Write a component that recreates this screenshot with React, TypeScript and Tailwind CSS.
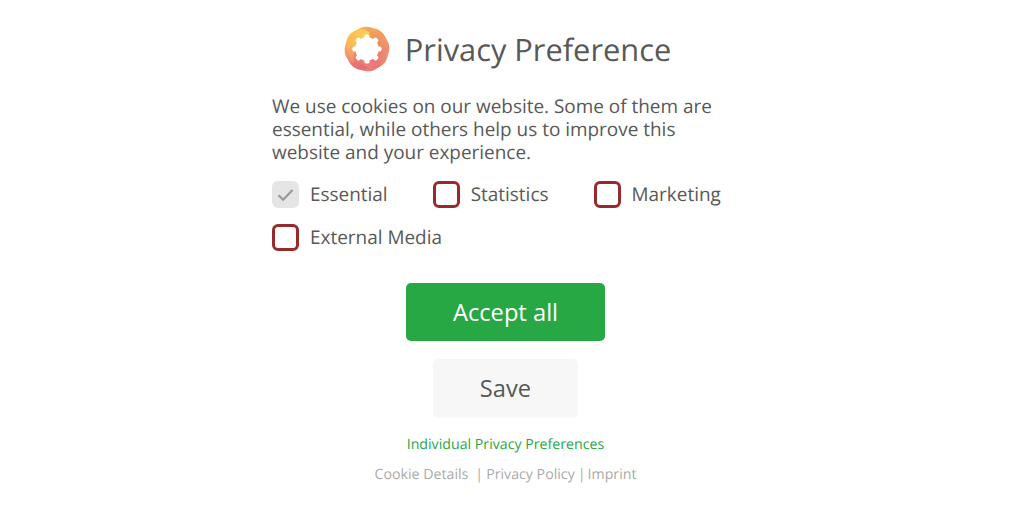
import clsx from "clsx";

interface Category {
  label: string;
  locked?: boolean;
}

const categories: Category[] = [
  { label: "Essential", locked: true },
  { label: "Statistics" },
  { label: "Marketing" },
  { label: "External Media" },
];

// One lobe of the ring per entry, clockwise from the top
const lobes = [
  { from: "#fbbd55", to: "#f0925a" },
  { from: "#f9ae5c", to: "#e98262" },
  { from: "#f4a468", to: "#e67868" },
  { from: "#f09a70", to: "#e4687a" },
  { from: "#ea7078", to: "#f08a78" },
  { from: "#e4607c", to: "#f08c6c" },
  { from: "#ee7a70", to: "#fdd060" },
  { from: "#fbb04c", to: "#fdcf58" },
];

function Logo() {
  return (
    <svg className="h-[46px] w-[46px] shrink-0" viewBox="-23 -23 46 46" aria-hidden="true">
      <defs>
        {lobes.map(({ from, to }, i) => (
          <linearGradient key={i} id={`lobe-${i}`} x1="0" y1="0" x2="1" y2="0.4">
            <stop offset="0" stopColor={from} />
            <stop offset="1" stopColor={to} />
          </linearGradient>
        ))}
      </defs>
      {lobes.map((_, i) => (
        <path
          key={i}
          d="M-14 -13 C-12 -20 -5 -23.5 2 -22 C9 -21 13 -16 13.5 -10 L8 -7 C4 -12 -6 -14 -14 -13Z"
          fill={`url(#lobe-${i})`}
          transform={`rotate(${i * 45})`}
        />
      ))}
      <circle r="11.8" fill="#fff" />
      {lobes.map((_, i) => (
        <rect key={i} x="-2.6" y="-14.6" width="5.2" height="7" rx="1.8" fill="#fff" transform={`rotate(${i * 45})`} />
      ))}
    </svg>
  );
}

function CategoryOption({ label, locked }: Category) {
  return (
    <label className="flex items-center gap-[11px]">
      <span
        className={clsx(
          "flex h-[27px] w-[27px] items-center justify-center rounded-[6px]",
          locked ? "bg-[#e5e5e5]" : "border-[3px] border-[#972a2d] bg-white"
        )}
      >
        {locked && (
          <svg className="h-[14px] w-[17px]" viewBox="0 0 17 14" fill="none" stroke="#999" strokeWidth="2.2">
            <path d="M1.5 7.2 6.2 11.8 15.5 2" />
          </svg>
        )}
      </span>
      <span className="whitespace-nowrap">{label}</span>
    </label>
  );
}

export default function App() {
  return (
    <main className="h-[506px] w-[1012px] overflow-hidden bg-white pl-[272px] font-['Open_Sans',sans-serif] text-[#585858] [text-rendering:geometricPrecision]">
      <div className="flex w-[467px] flex-col items-center pt-[26px]">
        <div className="flex h-[46px] items-center gap-[15px] pl-[4px]">
          <Logo />
          <h1 className="whitespace-nowrap pt-[2px] text-[30.8px] leading-[46px]">Privacy Preference</h1>
        </div>

        <p className="mt-[23px] w-full text-[18.96px] leading-[23px]">
          We use cookies on our website. Some of them are
          <br />
          essential, while others help us to improve this
          <br />
          website and your experience.
        </p>

        <div className="mt-[17px] flex w-full flex-wrap gap-x-[45px] gap-y-[16px] text-[18.96px] leading-[27px]">
          {categories.map((category) => (
            <CategoryOption key={category.label} {...category} />
          ))}
        </div>

        <button className="mt-[32px] h-[58px] w-[199px] rounded-[5px] bg-[#28a745] pt-[2px] text-[23.7px] text-white">
          Accept all
        </button>
        <button className="mt-[18px] h-[59px] w-[145px] rounded-[5px] bg-[#f7f7f7] text-[23.7px]">Save</button>

        <a className="mt-[17px] text-[14.2px] leading-[20px] text-[#28a745]">Individual Privacy Preferences</a>
        <div className="mt-[10px] flex text-[14.2px] leading-[20px] text-[#aaa]">
          <a>Cookie Details</a>
          <span className="ml-[7px] mr-[3px]">|</span>
          <a>Privacy Policy</a>
          <span className="ml-[3px] mr-[2px]">|</span>
          <a>Imprint</a>
        </div>
      </div>
    </main>
  );
}
